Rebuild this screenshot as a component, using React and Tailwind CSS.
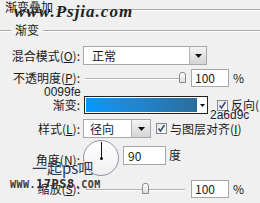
const font = { fontFamily: '"Noto Sans CJK SC", "Liberation Sans", sans-serif' };

function Arrow({ w = 'w-[17px]' }) {
    return (
        <div className={`${w} h-full flex items-center justify-center bg-gradient-to-b from-[#f4f4f4] to-[#d4d4d4] border-l border-[#b5b5b5]`}>
            <svg width="7" height="4" viewBox="0 0 7 4"><path d="M0 0h7L3.5 4z" fill="#111" /></svg>
        </div>
    );
}

function Check() {
    return (
        <div className="w-[11px] h-[11px] border border-[#8a8a8a] bg-gradient-to-br from-[#e8e8e8] to-[#fafafa] flex items-center justify-center">
            <svg width="9" height="9" viewBox="0 0 9 9"><path d="M1.5 4.5l2 2.5 4-6" stroke="#3a4d7a" strokeWidth="1.6" fill="none" /></svg>
        </div>
    );
}

function Slider({ thumb }) {
    return (
        <div className="relative w-[100px] h-[18px] ml-[4px] mr-[6px]">
            <div className="absolute left-0 right-0 top-[9px] h-[2px] border-t border-[#b0b0b0] bg-white" />
            <div className={`absolute ${thumb} top-[3px] w-[7px] h-[11px] rounded-t-[3px] border border-[#8a8a8a] bg-gradient-to-b from-white to-[#dcdcdc]`} />
        </div>
    );
}

function Label({ children, className = '' }) {
    return <div className={`w-[81px] text-right pr-[1px] ${className}`}>{children}</div>;
}

export default function App() {
    return (
        <div className="relative w-[260px] h-[203px] overflow-hidden bg-[#f0f0f0] text-[12px] leading-[14px] text-[#1a1a1a]" style={font}>
            {/* title */}
            <div className="flex items-start">
                <span className="ml-[5px] leading-[13px]">渐变叠加</span>
                <div className="flex-1 mt-[9px] ml-[3px] border-t border-b border-t-[#a8a8a8] border-b-white h-[2px]" />
            </div>
            {/* group */}
            <div className="flex items-start mt-[10px]">
                <div className="w-[11px] mt-[7px] border-t border-b border-t-[#a8a8a8] border-b-white h-[2px]" />
                <span className="ml-[4px] leading-[14px]">渐变</span>
                <div className="flex-1 ml-[4px] mt-[7px] border-t border-b border-t-[#a8a8a8] border-b-white h-[2px]" />
            </div>

            {/* blend mode */}
            <div className="flex items-center mt-[9px] h-[19px]">
                <Label>混合模式(<u>O</u>):</Label>
                <div className="ml-[2px] w-[124px] h-[19px] flex bg-white border border-[#a7a7a7]">
                    <div className="flex-1 pl-[8px] leading-[17px]">正常</div>
                    <Arrow />
                </div>
            </div>

            {/* opacity */}
            <div className="flex items-center mt-[3px] h-[19px]">
                <Label>不透明度(<u>P</u>):</Label>
                <Slider thumb="left-[94px]" />
                <div className="w-[38px] h-[18px] bg-white border border-[#a7a7a7] pl-[3px] leading-[16px]">100</div>
                <span className="ml-[4px]">%</span>
            </div>

            {/* gradient */}
            <div className="flex items-center mt-[9px] h-[18px]">
                <Label>渐变:</Label>
                <div className="ml-[3px] w-[124px] h-[18px] flex border border-[#222] bg-white">
                    <div className="flex-1 m-[1px] bg-gradient-to-r from-[#0099fe] to-[#2a6d9c]" />
                    <div className="w-[9px] flex items-center justify-center bg-white">
                        <svg width="5" height="3" viewBox="0 0 5 3"><path d="M0 0h5L2.5 3z" fill="#111" /></svg>
                    </div>
                </div>
                <div className="ml-[9px]"><Check /></div>
                <span className="ml-[3px] whitespace-nowrap">反向(</span>
            </div>

            {/* style */}
            <div className="flex items-center mt-[5px] h-[19px]">
                <Label>样式(<u>L</u>):</Label>
                <div className="ml-[2px] w-[68px] h-[19px] flex bg-white border border-[#a7a7a7]">
                    <div className="flex-1 pl-[6px] leading-[17px]">径向</div>
                    <Arrow w="w-[19px]" />
                </div>
                <div className="ml-[5px]"><Check /></div>
                <span className="ml-[3px] whitespace-nowrap">与图层对齐(<u>I</u>)</span>
            </div>

            {/* angle */}
            <div className="flex items-start mt-[2px] h-[36px]">
                <Label className="mt-[13px]">角度(<u>N</u>):</Label>
                <div className="ml-[2px] w-[36px] h-[36px] rounded-full border border-[#8b95a5] bg-gradient-to-b from-white to-[#f0f0f0] relative shrink-0">
                    <div className="absolute left-[17px] top-[1px] w-px h-[17px] bg-[#111]" />
                    <div className="absolute left-[16px] top-[16px] w-[3px] h-[3px] rounded-full bg-[#111]" />
                </div>
                <div className="ml-[4px] mt-[6px] w-[43px] h-[19px] bg-white border border-[#a7a7a7] pl-[4px] leading-[17px]">90</div>
                <span className="ml-[3px] mt-[8px]">度</span>
            </div>

            {/* scale */}
            <div className="flex items-center mt-[3px] h-[19px]">
                <Label>缩放(<u>S</u>):</Label>
                <Slider thumb="left-[57px]" />
                <div className="w-[38px] h-[18px] bg-white border border-[#a7a7a7] pl-[3px] leading-[16px]">100</div>
                <span className="ml-[4px]">%</span>
            </div>

            {/* watermarks over the dialog */}
            <div className="absolute left-[14px] top-[5px] text-[17px] italic font-bold tracking-[1px] text-[#222]" style={{ fontFamily: '"Liberation Serif", serif' }}>
                www.Psjia.com
            </div>
            <div className="absolute left-[44px] top-[86px] text-[12px] leading-[12px] text-[#222]" style={{ fontFamily: '"Liberation Sans", sans-serif' }}>0099fe</div>
            <div className="absolute left-[210px] top-[109px] text-[12px] leading-[12px] text-[#222]" style={{ fontFamily: '"Liberation Sans", sans-serif' }}>2a6d9c</div>
            <div className="absolute left-[32px] top-[160px] text-[15px] leading-[16px] text-[#2c3d55]" style={font}>一起ps吧</div>
            <div className="absolute left-[10px] top-[179px] text-[10px] leading-[10px] font-bold tracking-[0.5px] text-[#3a3a3a]" style={{ fontFamily: '"DejaVu Sans Mono", monospace' }}>
                WWW.<span className="text-[12px] text-[#2c2c2c]">17PS8</span>.COM
            </div>
        </div>
    );
}
